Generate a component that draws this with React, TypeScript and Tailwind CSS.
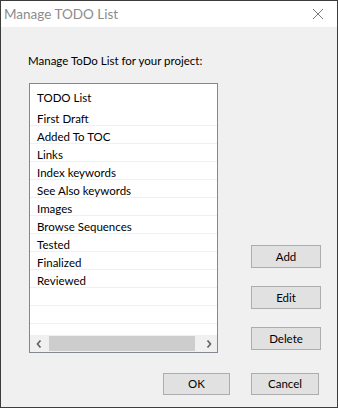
import React from 'react';

const items = [
  'First Draft',
  'Added To TOC',
  'Links',
  'Index keywords',
  'See Also keywords',
  'Images',
  'Browse Sequences',
  'Tested',
  'Finalized',
  'Reviewed',
  '',
  '',
];

const font = { fontFamily: 'Lato, "Noto Sans", sans-serif' };

const Btn: React.FC<{ label: string; className?: string }> = ({ label, className = '' }) => (
  <button
    className={`flex items-center justify-center bg-[#e1e1e1] border border-[#adadad] text-[11.5px] text-black leading-none ${className}`}
  >
    {label}
  </button>
);

const App: React.FC = () => {
  return (
    <div className="w-[338px] h-[408px] border border-[#3c3c3c] flex flex-col bg-[#f0f0f0]" style={font}>
      {/* title bar */}
      <div className="h-[26px] bg-white flex items-center justify-between pl-[3px] pr-[10px]">
        <span className="text-[13.5px] text-[#8c8c8c]">Manage TODO List</span>
        <svg width="12" height="12" viewBox="0 0 12 12" className="mr-[3px]">
          <path d="M1 1L11 11M11 1L1 11" stroke="#7a7a7a" strokeWidth="1" fill="none" />
        </svg>
      </div>

      <div className="flex-1 flex flex-col pl-[27px]">
        <p className="mt-[26px] text-[11.5px] text-black leading-[16px]">Manage ToDo List for your project:</p>

        <div className="flex mt-[14px]">
          {/* list box */}
          <div className="w-[189px] h-[270px] ml-[1px] border border-[#828790] bg-white flex flex-col">
            <div className="h-[24px] flex items-center pt-[3px] pl-[7px] text-[11.5px] text-black leading-none">TODO List</div>
            <div className="flex-1 overflow-hidden">
              {items.map((it, i) => (
                <div
                  key={i}
                  className="h-[18px] border-b border-[#f0f0f0] flex items-center pt-[4px] pl-[7px] text-[11.5px] text-black leading-none"
                >
                  {it}
                </div>
              ))}
            </div>
            <div className="h-[17px] bg-[#f0f0f0] flex items-center">
              <div className="w-[17px] h-full flex items-center justify-center">
                <svg width="6" height="8" viewBox="0 0 6 8">
                  <path d="M4.5 0.5L1.5 4L4.5 7.5" stroke="#606060" strokeWidth="1.6" fill="none" />
                </svg>
              </div>
              <div className="flex-1 h-full py-[1px] pl-[2px] pr-[5px]">
                <div className="h-full bg-[#cdcdcd]"></div>
              </div>
              <div className="w-[17px] h-full flex items-center justify-center">
                <svg width="6" height="8" viewBox="0 0 6 8">
                  <path d="M1.5 0.5L4.5 4L1.5 7.5" stroke="#606060" strokeWidth="1.6" fill="none" />
                </svg>
              </div>
            </div>
          </div>

          {/* side buttons */}
          <div className="flex flex-col ml-[33px] pt-[162px] gap-[18px]">
            <Btn label="Add" className="w-[70px] h-[23px]" />
            <Btn label="Edit" className="w-[70px] h-[23px]" />
            <Btn label="Delete" className="w-[70px] h-[23px]" />
          </div>
        </div>

        <div className="flex justify-end gap-[21px] mt-[20px] pr-[18px]">
          <Btn label="OK" className="w-[67px] h-[22px]" />
          <Btn label="Cancel" className="w-[68px] h-[22px]" />
        </div>
      </div>
    </div>
  );
};

export default App;
